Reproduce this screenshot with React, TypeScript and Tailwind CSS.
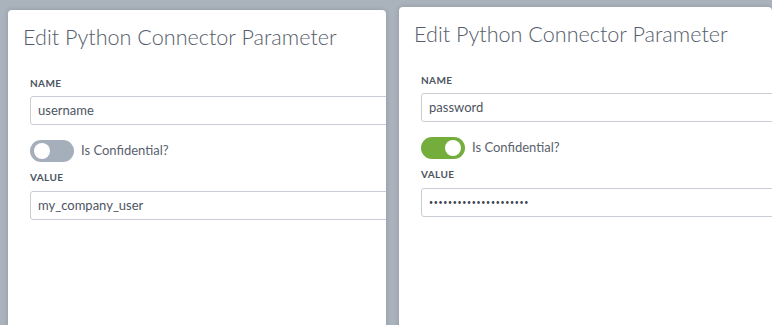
import React from 'react';

interface ParamDialogProps {
  name: string;
  value: string;
  confidential: boolean;
  className?: string;
}

function Toggle({ on }: { on: boolean }) {
  return (
    <div
      className={`relative h-[22px] w-[44px] shrink-0 rounded-full ${on ? 'bg-[#74ad3c]' : 'bg-[#a5afbb]'}`}
    >
      <div
        className={`absolute top-[3px] h-4 w-4 rounded-full bg-white ${on ? 'right-[4px]' : 'left-[4px]'}`}
      />
    </div>
  );
}

function ParamDialog({ name, value, confidential, className }: ParamDialogProps) {
  return (
    <div className={`h-[340px] shrink-0 overflow-hidden rounded-t-[4px] bg-white shadow-[0_0_4px_rgba(60,70,80,0.25)] ${className ?? ''}`}>
      <h2 className="pl-[15px] pt-[13px] text-[21.6px] font-light leading-[28px] text-[#555d6a]">
        Edit Python Connector Parameter
      </h2>

      <div className="mt-[25px] w-[430px] pl-[22px]">
        <label className="block text-[10px] font-bold uppercase leading-[14px] tracking-[0.4px] text-[#4d5561]">
          Name
        </label>
        <div className="mt-[6px] flex h-[29px] items-center rounded-[3px] border border-[#c9ced5] px-[7px] text-[13px] text-[#4d5561]">
          {name}
        </div>

        <div className="mt-[15px] flex items-center gap-[7px]">
          <Toggle on={confidential} />
          <span className="text-[13px] text-[#5a626e]">Is Confidential?</span>
        </div>

        <label className="mt-[8px] block text-[10px] font-bold uppercase leading-[14px] tracking-[0.4px] text-[#4d5561]">
          Value
        </label>
        <div className="mt-[7px] flex h-[29px] items-center rounded-[3px] border border-[#c9ced5] px-[7px] text-[13px] text-[#4d5561]">
          {confidential ? (
            <span className="text-[7px] tracking-[0.7px] text-[#3f4651]">{'•'.repeat(21)}</span>
          ) : (
            value
          )}
        </div>
      </div>
    </div>
  );
}

export default function App() {
  return (
    <div
      className="flex h-[325px] w-[772px] gap-[13px] overflow-hidden bg-[#aab2bc] pl-2"
      style={{ fontFamily: 'Lato, "Open Sans", sans-serif' }}
    >
      <ParamDialog className="mt-[10px] w-[378px]" name="username" value="my_company_user" confidential={false} />
      <ParamDialog className="mt-[7px] flex-1" name="password" value="secret" confidential />
    </div>
  );
}
